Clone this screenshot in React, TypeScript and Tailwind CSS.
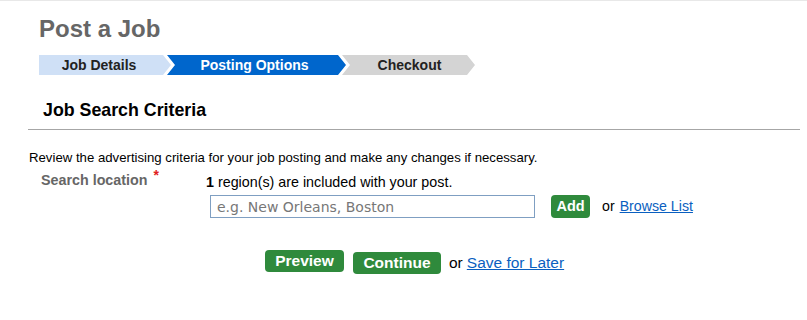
import React from "react";

const arrow = "[clip-path:polygon(0_0,calc(100%_-_8px)_0,100%_50%,calc(100%_-_8px)_100%,0_100%)]";
const notched =
  "[clip-path:polygon(0_0,calc(100%_-_8px)_0,100%_50%,calc(100%_-_8px)_100%,0_100%,8px_50%)]";

function Steps() {
  return (
    <div className="flex h-[20px] mt-[12px] text-[14px] font-bold leading-[20px]">
      <div className={`w-[132px] bg-[#cfe0f6] text-[#222] text-center pr-[12px] ${arrow}`}>Job Details</div>
      <div className={`-ml-[4px] w-[179px] bg-[#0066cc] text-white text-center pl-[2px] pr-[6px] ${notched}`}>
        Posting Options
      </div>
      <div className={`-ml-[4px] w-[133px] bg-[#d4d4d4] text-[#222] text-center pl-[4px] pr-[2px] ${notched}`}>
        Checkout
      </div>
    </div>
  );
}

export default function App() {
  return (
    <div className="min-h-screen bg-white border-t border-[#e8e8e8] font-['Liberation_Sans',Arial,sans-serif] text-black">
      <div className="pl-[39px] pt-[14px]">
        <h1 className="text-[24px] leading-[28px] font-bold text-[#666666]">Post a Job</h1>
        <Steps />
      </div>

      <div className="ml-[28px] mr-[7px] mt-[25px] pl-[15px] pb-[9px] border-b border-[#a6a6a6]">
        <h2 className="text-[17.8px] leading-[20px] font-bold">Job Search Criteria</h2>
      </div>

      <p className="ml-[29px] mt-[20px] text-[13.2px] leading-[15px]">
        Review the advertising criteria for your job posting and make any changes if necessary.
      </p>

      <div className="flex mt-[5px]">
        <div className="w-[206px] pl-[41px] pt-[2px] text-[14.3px] leading-[17px]">
          <span className="font-bold text-[#666666]">Search location</span>
          <span className="relative -top-[5px] ml-[6px] text-[14px] font-bold text-[#e02020]">*</span>
        </div>
        <div>
          <div className="text-[14.3px] leading-[17px] pt-[4px]">
            <span className="font-bold">1</span> region(s) are included with your post.
          </div>
          <div className="flex items-center mt-[4px]">
            <input
              type="text"
              placeholder="e.g. New Orleans, Boston"
              className="ml-[4px] w-[325px] h-[23px] border border-[#7f9fc2] px-[6px] text-[14px] font-['DejaVu_Sans',sans-serif] placeholder:text-[#777] outline-none"
            />
            <button className="ml-[16px] w-[39px] h-[23px] rounded-[4px] bg-[#2f8a3c] text-white text-[14.5px] font-bold">
              Add
            </button>
            <span className="ml-[12px] text-[14.2px]">or</span>
            <a href="#" className="ml-[5px] text-[14.2px] text-[#0a5fc0] underline">
              Browse List
            </a>
          </div>
        </div>
      </div>

      <div className="flex items-start ml-[265px] mt-[32px]">
        <button className="w-[79px] h-[22px] rounded-[4px] bg-[#2f8a3c] text-white text-[15.5px] font-bold leading-[22px]">
          Preview
        </button>
        <button className="ml-[9px] mt-[2px] w-[88px] h-[22px] rounded-[4px] bg-[#2f8a3c] text-white text-[15.5px] font-bold leading-[22px]">
          Continue
        </button>
        <span className="ml-[8px] mt-[3px] text-[15.5px] leading-[20px]">or</span>
        <a href="#" className="ml-[4px] mt-[3px] text-[15.5px] leading-[20px] text-[#0a5fc0] underline">
          Save for Later
        </a>
      </div>
    </div>
  );
}
